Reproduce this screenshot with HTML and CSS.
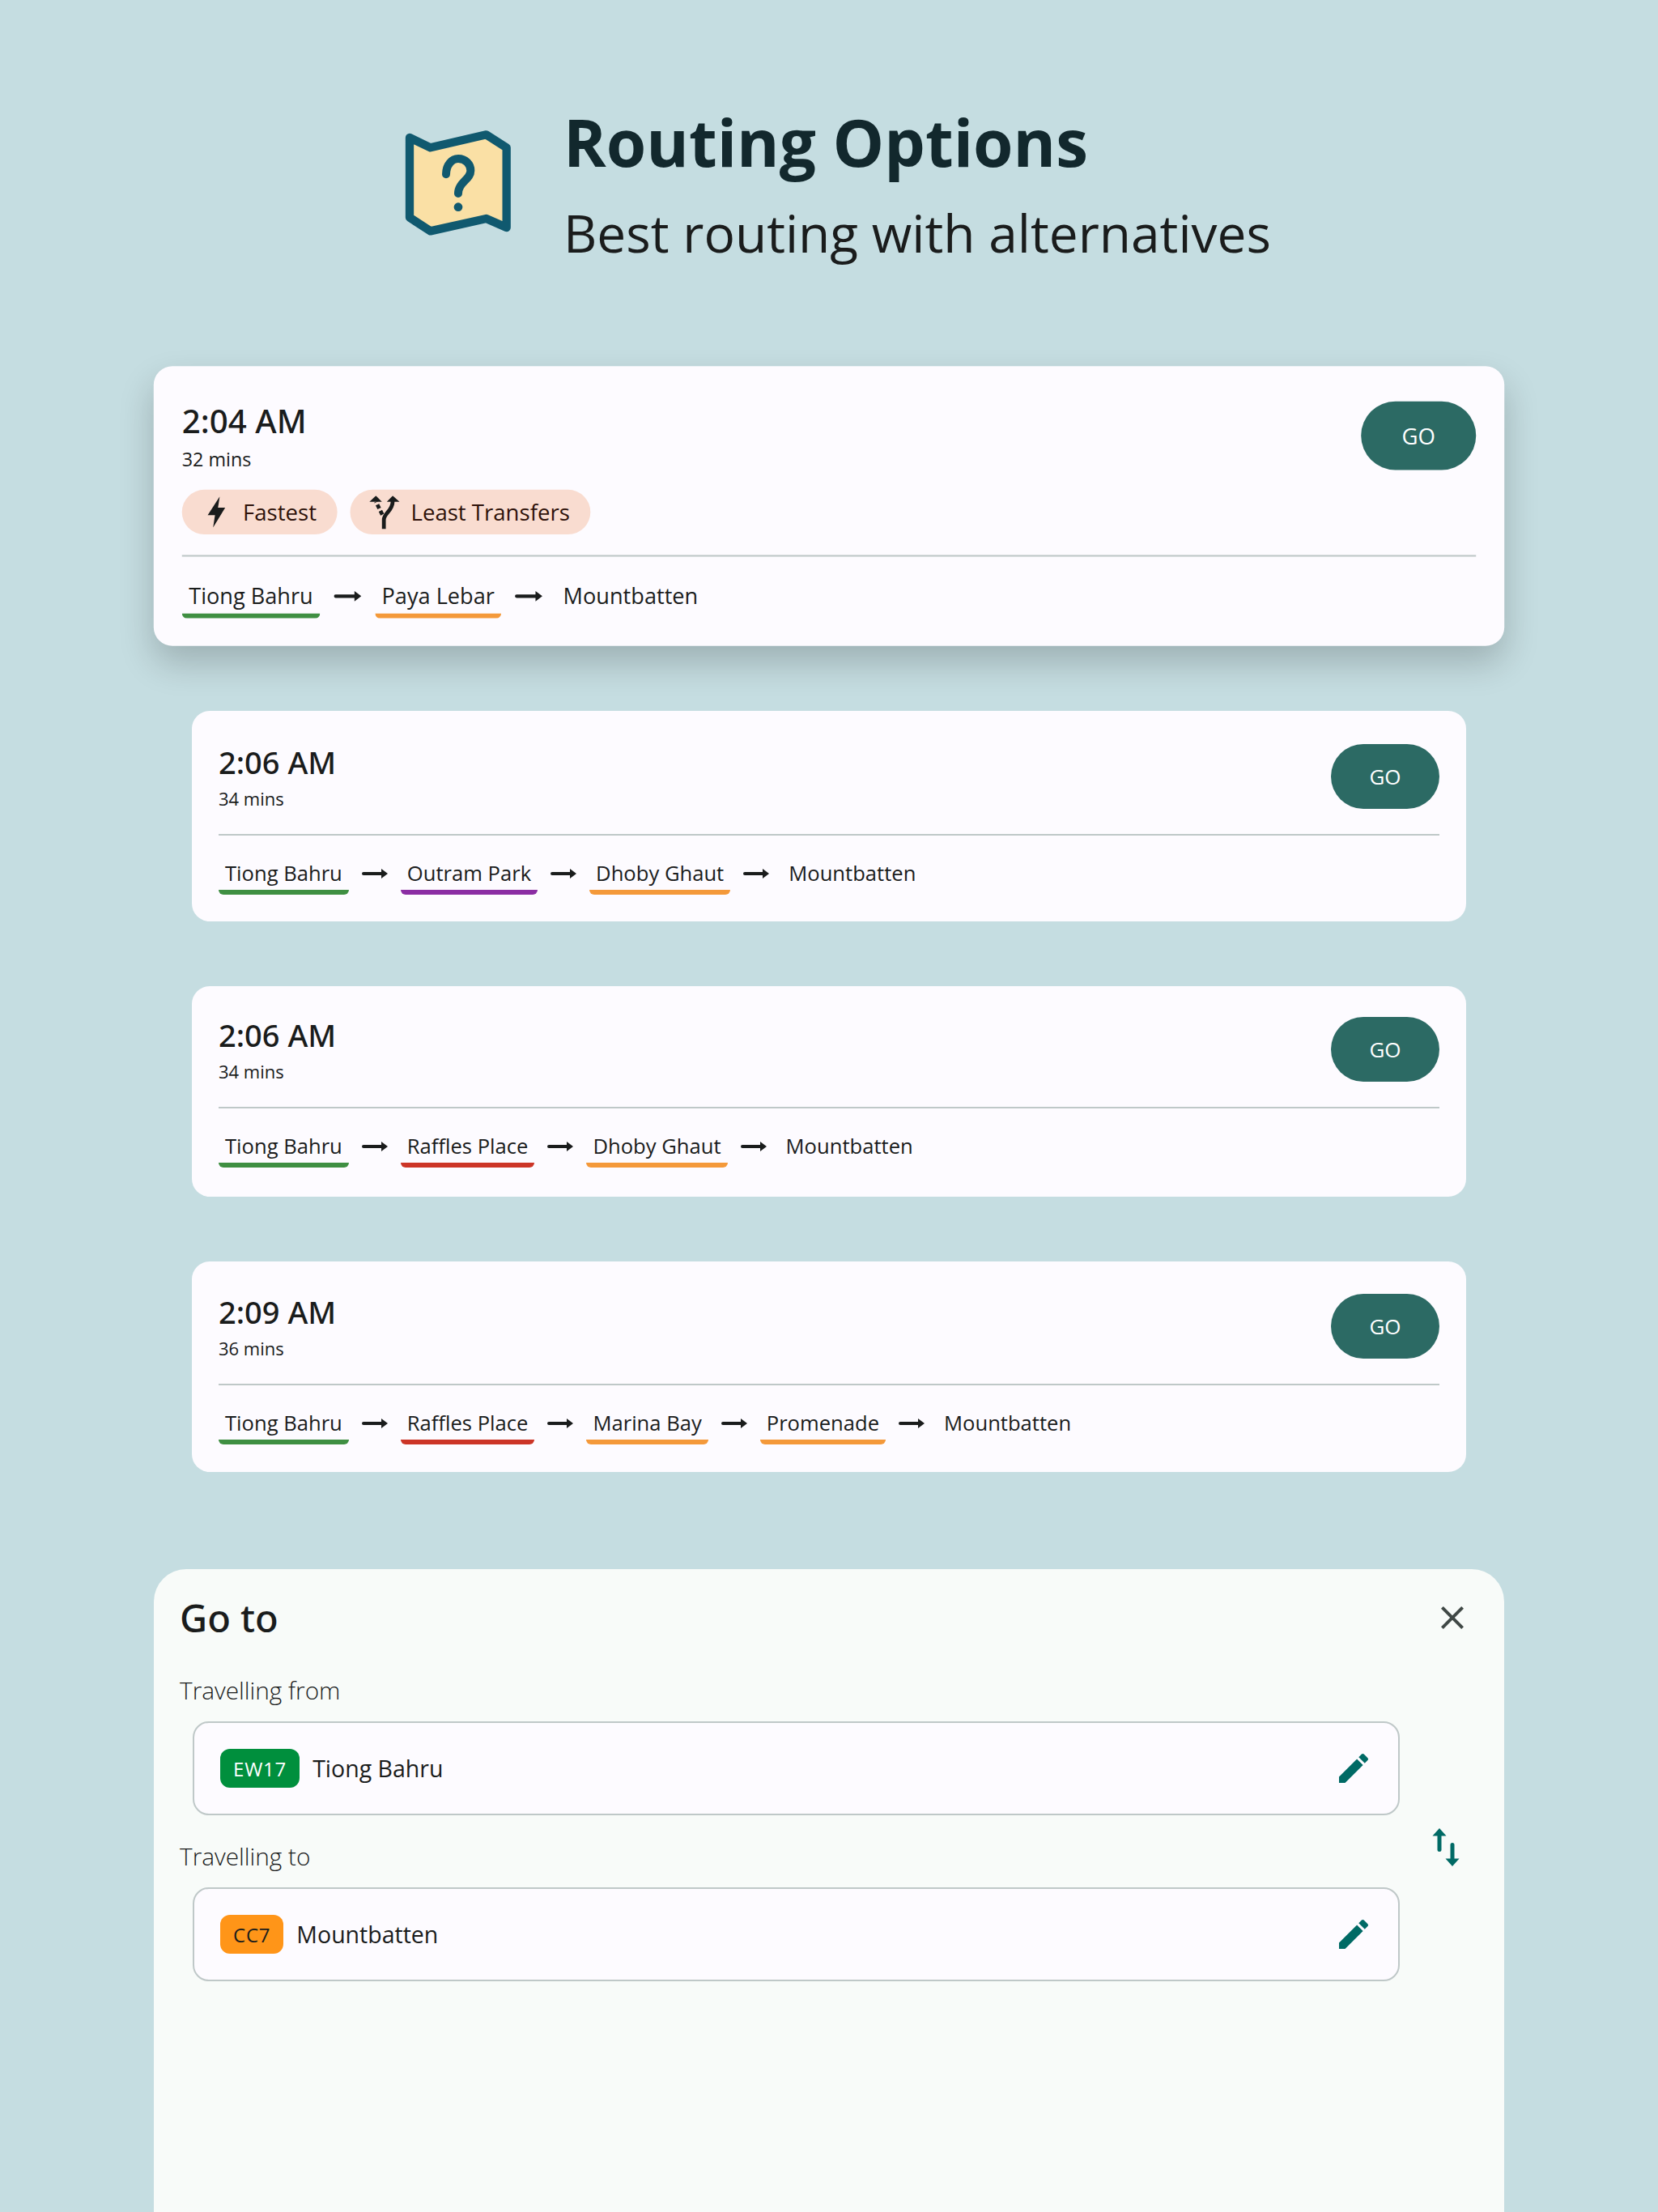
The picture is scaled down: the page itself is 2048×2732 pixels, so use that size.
FILE: index.html
```html
<!DOCTYPE html>
<html lang="en">
<head>
<meta charset="utf-8">
<title>Routing Options</title>
<link rel="stylesheet" href="styles.css">
</head>
<body>
<main class="page">
  <header class="hero">
    <svg class="hero-icon" viewBox="0 0 510 510" aria-hidden="true">
      <path class="map" d="M78 90 L155 127 L362 79 L437 127 V423 L362 390 L155 436 L78 386 Z"/>
      <path class="q" d="M213 226 C213 190 235 168 258 168 C285 168 304 188 304 212 C304 245 258 255 258 297"/>
      <circle class="dot" cx="258" cy="347" r="16"/>
    </svg>
    <div class="hero-text">
      <h1>Routing Options</h1>
      <p>Best routing with alternatives</p>
    </div>
  </header>

  <section class="routes">
    <article class="card card-best">
      <div class="card-head">
        <div class="card-times">
          <div class="time">2:04 AM</div>
          <div class="mins">32 mins</div>
        </div>
        <button class="go">GO</button>
      </div>
      <div class="pills">
        <span class="pill">
          <svg class="pill-icon" viewBox="0 0 36 36" aria-hidden="true"><path class="solid" d="M22 0 L8 21.500 H16.500 L14.300 36 L28.400 13 H20 Z"/></svg>
          Fastest
        </span>
        <span class="pill">
          <svg class="pill-icon fork" viewBox="0 0 36 39" aria-hidden="true">
            <path class="solid" d="M8 0 L0.500 7 H15 Z M27.600 0 L20.700 7 H35.500 Z"/>
            <path class="line" d="M17.300 39 V28 C17.300 20 27.600 18 27.600 6"/>
            <path class="line dash" d="M15.500 22 L8 7"/>
          </svg>
          Least Transfers
        </span>
      </div>
      <hr class="rule">
      <div class="route">
        <span class="stop line-green">Tiong Bahru</span>
        <svg class="arrow" viewBox="0 0 32 14" aria-hidden="true"><path d="M2 5H24V1L32 7L24 13V9H2A2 2 0 0 1 2 5Z"/></svg>
        <span class="stop line-orange">Paya Lebar</span>
        <svg class="arrow" viewBox="0 0 32 14" aria-hidden="true"><path d="M2 5H24V1L32 7L24 13V9H2A2 2 0 0 1 2 5Z"/></svg>
        <span class="stop">Mountbatten</span>
      </div>
    </article>

    <article class="card">
      <div class="card-head">
        <div class="card-times">
          <div class="time">2:06 AM</div>
          <div class="mins">34 mins</div>
        </div>
        <button class="go">GO</button>
      </div>
      <hr class="rule">
      <div class="route">
        <span class="stop line-green">Tiong Bahru</span>
        <svg class="arrow" viewBox="0 0 32 14" aria-hidden="true"><path d="M2 5H24V1L32 7L24 13V9H2A2 2 0 0 1 2 5Z"/></svg>
        <span class="stop line-purple">Outram Park</span>
        <svg class="arrow" viewBox="0 0 32 14" aria-hidden="true"><path d="M2 5H24V1L32 7L24 13V9H2A2 2 0 0 1 2 5Z"/></svg>
        <span class="stop line-orange">Dhoby Ghaut</span>
        <svg class="arrow" viewBox="0 0 32 14" aria-hidden="true"><path d="M2 5H24V1L32 7L24 13V9H2A2 2 0 0 1 2 5Z"/></svg>
        <span class="stop">Mountbatten</span>
      </div>
    </article>

    <article class="card card-third">
      <div class="card-head">
        <div class="card-times">
          <div class="time">2:06 AM</div>
          <div class="mins">34 mins</div>
        </div>
        <button class="go">GO</button>
      </div>
      <hr class="rule">
      <div class="route">
        <span class="stop line-green">Tiong Bahru</span>
        <svg class="arrow" viewBox="0 0 32 14" aria-hidden="true"><path d="M2 5H24V1L32 7L24 13V9H2A2 2 0 0 1 2 5Z"/></svg>
        <span class="stop line-red">Raffles Place</span>
        <svg class="arrow" viewBox="0 0 32 14" aria-hidden="true"><path d="M2 5H24V1L32 7L24 13V9H2A2 2 0 0 1 2 5Z"/></svg>
        <span class="stop line-orange">Dhoby Ghaut</span>
        <svg class="arrow" viewBox="0 0 32 14" aria-hidden="true"><path d="M2 5H24V1L32 7L24 13V9H2A2 2 0 0 1 2 5Z"/></svg>
        <span class="stop">Mountbatten</span>
      </div>
    </article>

    <article class="card card-fourth">
      <div class="card-head">
        <div class="card-times">
          <div class="time">2:09 AM</div>
          <div class="mins">36 mins</div>
        </div>
        <button class="go">GO</button>
      </div>
      <hr class="rule">
      <div class="route">
        <span class="stop line-green">Tiong Bahru</span>
        <svg class="arrow" viewBox="0 0 32 14" aria-hidden="true"><path d="M2 5H24V1L32 7L24 13V9H2A2 2 0 0 1 2 5Z"/></svg>
        <span class="stop line-red">Raffles Place</span>
        <svg class="arrow" viewBox="0 0 32 14" aria-hidden="true"><path d="M2 5H24V1L32 7L24 13V9H2A2 2 0 0 1 2 5Z"/></svg>
        <span class="stop line-orange">Marina Bay</span>
        <svg class="arrow" viewBox="0 0 32 14" aria-hidden="true"><path d="M2 5H24V1L32 7L24 13V9H2A2 2 0 0 1 2 5Z"/></svg>
        <span class="stop line-orange">Promenade</span>
        <svg class="arrow" viewBox="0 0 32 14" aria-hidden="true"><path d="M2 5H24V1L32 7L24 13V9H2A2 2 0 0 1 2 5Z"/></svg>
        <span class="stop">Mountbatten</span>
      </div>
    </article>
  </section>

  <section class="sheet">
    <div class="sheet-head">
      <h2>Go to</h2>
      <svg class="close" viewBox="0 0 24 24" aria-hidden="true"><path d="M19 6.41L17.59 5 12 10.59 6.41 5 5 6.41 10.59 12 5 17.59 6.41 19 12 13.41 17.59 19 19 17.59 13.41 12z"/></svg>
    </div>
    <div class="sheet-body">
      <div class="fields">
        <label class="field-label">Travelling from</label>
        <div class="field">
          <span class="code code-green">EW17</span>
          <span class="field-name">Tiong Bahru</span>
          <svg class="edit" viewBox="0 0 24 24" aria-hidden="true"><path d="M3 17.25V21h3.750L17.810 9.940l-3.750-3.750L3 17.250zM20.710 7.040c.39-.39.39-1.020 0-1.410l-2.340-2.340c-.39-.39-1.020-.39-1.410 0l-1.830 1.830 3.750 3.750 1.830-1.830z"/></svg>
        </div>
        <label class="field-label">Travelling to</label>
        <div class="field">
          <span class="code code-orange">CC7</span>
          <span class="field-name">Mountbatten</span>
          <svg class="edit" viewBox="0 0 24 24" aria-hidden="true"><path d="M3 17.25V21h3.750L17.810 9.940l-3.750-3.750L3 17.250zM20.710 7.040c.39-.39.39-1.020 0-1.410l-2.340-2.340c-.39-.39-1.020-.39-1.410 0l-1.830 1.830 3.750 3.750 1.830-1.830z"/></svg>
        </div>
      </div>
      <svg class="swap" viewBox="0 0 34 47" aria-hidden="true">
        <path d="M9 0 L17.500 9.500 H11.500 V26.500 Q11.500 29 9 29 Q6.500 29 6.500 26.500 V9.500 H0.500 Z"/>
        <path d="M25 47 L16.500 37.500 H22.500 V20.500 Q22.500 18 25 18 Q27.500 18 27.500 20.500 V37.500 H33.500 Z"/>
      </svg>
    </div>
  </section>
</main>
</body>
</html>
```

FILE: styles.css
```css
* { box-sizing: border-box; }

html, body {
  margin: 0;
  padding: 0;
}

body {
  background: #c5dde1;
  font-family: "Open Sans", "Liberation Sans", sans-serif;
  color: #1a1c1c;
}

.page {
  width: 2048px;
  height: 2732px;
  overflow: hidden;
  display: flex;
  flex-direction: column;
  align-items: center;
}

.hero {
  width: 100%;
  height: 462px;
  display: flex;
  align-items: flex-start;
  padding: 118px 0 0 480px;
  gap: 46px;
}

.hero-icon {
  width: 170px;
  height: 170px;
  margin-top: 22px;
  flex: none;
}

.map {
  fill: #fae0a5;
  stroke: #10596f;
  stroke-width: 31;
  stroke-linejoin: round;
}

.q {
  fill: none;
  stroke: #10596f;
  stroke-width: 30;
  stroke-linecap: round;
}

.dot { fill: #10596f; }

.hero-text h1 {
  margin: 0;
  font-size: 80px;
  line-height: 114px;
  font-weight: 700;
  color: #12282d;
}

.hero-text p {
  margin: 0;
  font-size: 64px;
  line-height: 112px;
  color: #1a1c1c;
}

.routes {
  width: 1574px;
  display: flex;
  flex-direction: column;
  gap: 80px;
}

.card {
  background: #fdfbff;
  border-radius: 22px;
  padding: 32px 33px 33px;
}

.card-best {
  transform: scale(1.06);
  margin-bottom: 10px;
  padding-bottom: 32px;
  box-shadow: 0 20px 40px rgba(0, 0, 0, 0.2);
}

.card-third {
  padding-top: 29px;
  padding-bottom: 36px;
}

.card-fourth {
  padding-top: 31px;
  padding-bottom: 34px;
}

.card-head {
  display: flex;
  justify-content: space-between;
  align-items: flex-start;
}

.card-times { margin-top: 2px; }

.time {
  font-family: "Noto Sans", "Open Sans", sans-serif;
  font-size: 38px;
  font-weight: 500;
  line-height: 59px;
}

.mins {
  font-size: 22px;
  line-height: 30px;
}

.go {
  width: 134px;
  height: 80px;
  margin-top: 9px;
  border: 0;
  border-radius: 40px;
  background: #2c6a64;
  color: #fff;
  font-family: inherit;
  font-size: 26px;
}

.pills {
  display: flex;
  gap: 15px;
  margin-top: 21px;
}

.pill {
  display: inline-flex;
  align-items: center;
  height: 52px;
  padding: 0 24px 0 22px;
  gap: 13px;
  border-radius: 26px;
  background: #f9dcd0;
  color: #2f130b;
  font-size: 26px;
}

.pill-icon {
  width: 36px;
  height: 36px;
  flex: none;
}

.fork { height: 39px; }

.solid { fill: #1a1c1c; }

.line {
  fill: none;
  stroke: #1a1c1c;
  stroke-width: 4.500;
}

.dash { stroke-dasharray: 5 3; }

.rule {
  height: 2px;
  margin: 29px 0 0;
  border: 0;
  background: #bfc8c8;
}

.pills + .rule { margin-top: 24px; }

.route {
  display: flex;
  align-items: center;
  gap: 16px;
  margin-top: 27px;
}

.pills ~ .route { margin-top: 26px; }

.stop {
  padding: 2px 8px;
  border-bottom: 6px solid transparent;
  border-radius: 0 0 6px 6px;
  font-size: 25.600px;
  line-height: 36px;
}

.arrow {
  width: 32px;
  height: 14px;
  fill: #1a1c1c;
  margin-bottom: 6px;
}

.line-green { border-bottom-color: #3f8f42; }
.line-orange { border-bottom-color: #f4993a; }
.line-purple { border-bottom-color: #8b2da3; }
.line-red { border-bottom-color: #cc3527; }

.sheet {
  width: 1668px;
  flex: 1;
  margin-top: 120px;
  padding: 30px 32px 0;
  background: #f8fbf9;
  border-radius: 40px 40px 0 0;
}

.sheet-head {
  display: flex;
  justify-content: space-between;
  align-items: center;
  margin-bottom: 5px;
}

.sheet-head h2 {
  margin: -2px 0 2px;
  font-family: "Noto Sans", "Open Sans", sans-serif;
  font-size: 47px;
  line-height: 64px;
  font-weight: 500;
}

.close {
  width: 48px;
  height: 48px;
  margin: -4px 8px 0 0;
  fill: #404846;
}

.sheet-body {
  display: flex;
  align-items: flex-start;
}

.fields {
  width: 1507px;
  flex: none;
}

.field-label {
  display: block;
  font-size: 29.800px;
  font-weight: 300;
  line-height: 40px;
  margin-top: 31px;
}

.field {
  display: flex;
  align-items: center;
  height: 116px;
  margin: 18px 0 0 16px;
  padding: 0 31px 0 32px;
  background: #fdfbff;
  border: 2px solid #bfc8c8;
  border-radius: 20px;
}

.code {
  height: 48px;
  padding: 0 16px;
  border-radius: 12px;
  display: inline-flex;
  align-items: center;
  font-size: 24px;
  letter-spacing: 0.800px;
}

.code-green {
  background: #008f3d;
  color: #fff;
}

.code-orange {
  background: #ff9518;
  color: #1a1c1c;
}

.field-name {
  margin-left: 16px;
  font-size: 28.500px;
  flex: 1;
}

.edit {
  width: 48px;
  height: 48px;
  fill: #006a65;
  flex: none;
}

.swap {
  width: 34px;
  height: 47px;
  margin: 221px 0 0 40px;
  fill: #006a65;
  flex: none;
}
```
